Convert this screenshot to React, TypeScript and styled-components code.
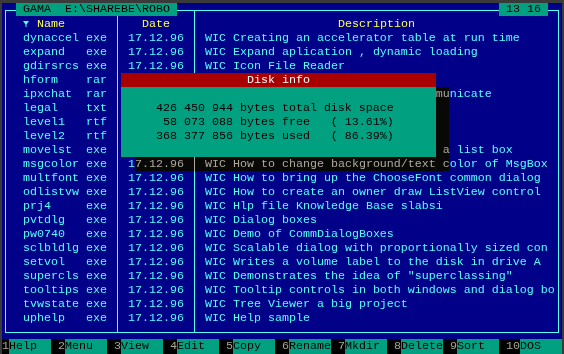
import React from 'react';
import styled, { createGlobalStyle } from 'styled-components';

const NAVY = '#000088';
const CYAN = '#55ffff';
const YELLOW = '#ffff55';
const GREEN = '#00a080';
const RED = '#a80000';
const TAN = '#a8a890';

const GlobalStyle = createGlobalStyle`
  html, body { margin: 0; padding: 0; background: #3a3a3a; }
  body { width: 564px; height: 354px; overflow: hidden; }
  #root { width: 564px; height: 354px; }
`;

const Screen = styled.div`
  position: relative;
  margin: 3px 2px 0 2px;
  width: 560px;
  height: 351px;
  background: ${NAVY};
  font-family: "Liberation Mono", "DejaVu Sans Mono", monospace;
  font-size: 11.667px;
  line-height: 14px;
  color: ${CYAN};
  white-space: pre;
  display: flex;
  flex-direction: column;
  overflow: hidden;
`;

const PanelArea = styled.div`
  height: 336px;
  flex: none;
`;

const Frame = styled.div`
  position: relative;
  box-sizing: border-box;
  margin: 7px 3px 0 3px;
  width: 554px;
  height: 323px;
  border: 1px solid ${CYAN};
  display: flex;
`;

const TitleTag = styled.div`
  position: absolute;
  top: -8px;
  height: 13px;
  line-height: 13px;
  background: ${GREEN};
  color: #000;
`;

const PathTitle = styled(TitleTag)`
  left: 10px;
  width: 161px;
`;

const Clock = styled(TitleTag)`
  left: 493px;
  width: 49px;
`;

const NameColumn = styled.div`
  box-sizing: border-box;
  width: 111px;
  padding: 6px 0 0 17px;
`;

const DateColumn = styled.div`
  box-sizing: border-box;
  width: 77px;
  border-left: 1px solid ${CYAN};
  padding-top: 6px;
  text-align: center;
`;

const DescColumn = styled.div`
  flex: 1;
  border-left: 1px solid ${CYAN};
  padding-top: 6px;
`;

const Header = styled.div`
  height: 14px;
  color: ${YELLOW};
  display: flex;
  align-items: center;
`;

const CenterHeader = styled(Header)`
  justify-content: center;
`;

const Arrow = styled.span`
  width: 14px;
  height: 14px;
  display: inline-flex;
  align-items: center;
  color: ${CYAN};
`;

const Row = styled.div`
  height: 14px;
  display: flex;
`;

const DateRow = styled.div`
  height: 14px;
`;

const DescRow = styled.div`
  height: 14px;
  padding-left: 10px;
  overflow: hidden;
`;

const FileName = styled.span`
  width: 63px;
  flex: none;
`;

const Ext = styled.span``;

const Dialog = styled.div`
  position: absolute;
  left: 119px;
  top: 70px;
  width: 315px;
  z-index: 2;
`;

const DialogTitle = styled.div`
  height: 14px;
  background: ${RED};
  color: #fff;
  text-align: center;
`;

const DialogBody = styled.div`
  box-sizing: border-box;
  height: 70px;
  background: ${GREEN};
  color: #000;
  padding: 14px 0 0 35px;
`;

const Shadow = styled.div`
  position: absolute;
  z-index: 1;
  backdrop-filter: grayscale(1) sepia(0.3) brightness(0.72);
  -webkit-backdrop-filter: grayscale(1) sepia(0.3) brightness(0.72);
`;

const RightShadow = styled(Shadow)`
  left: 434px;
  top: 84px;
  width: 14px;
  height: 84px;
`;

const BottomShadow = styled(Shadow)`
  left: 133px;
  top: 154px;
  width: 301px;
  height: 14px;
`;

const KeyBar = styled.div`
  display: flex;
  gap: 7px;
  height: 15px;
  background: #000;
`;

const Key = styled.div`
  display: flex;
`;

const KeyNum = styled.span`
  color: ${TAN};
`;

const KeyLabel = styled.span`
  width: 42px;
  height: 15px;
  background: ${GREEN};
  color: #000;
`;

const files: [string, string, string, string][] = [
  ['dynaccel', 'exe', '17.12.96', 'WIC Creating an accelerator table at run time'],
  ['expand', 'exe', '17.12.96', 'WIC Expand aplication , dynamic loading'],
  ['gdirsrcs', 'exe', '17.12.96', 'WIC Icon File Reader'],
  ['hform', 'rar', '17.12.96', 'WIC Help form'],
  ['ipxchat', 'rar', '17.12.96', 'WIC IPX chat how programs can communicate'],
  ['legal', 'txt', '17.12.96', 'Legal notes'],
  ['level1', 'rtf', '17.12.96', 'Level 1'],
  ['level2', 'rtf', '17.12.96', 'Level 2'],
  ['movelst', 'exe', '17.12.96', 'WIC How to move items to and from a list box'],
  ['msgcolor', 'exe', '17.12.96', 'WIC How to change background/text color of MsgBox'],
  ['multfont', 'exe', '17.12.96', 'WIC How to bring up the ChooseFont common dialog'],
  ['odlistvw', 'exe', '17.12.96', 'WIC How to create an owner draw ListView control'],
  ['prj4', 'exe', '17.12.96', 'WIC Hlp file Knowledge Base slabsi'],
  ['pvtdlg', 'exe', '17.12.96', 'WIC Dialog boxes'],
  ['pw0740', 'exe', '17.12.96', 'WIC Demo of CommDialogBoxes'],
  ['sclbldlg', 'exe', '17.12.96', 'WIC Scalable dialog with proportionally sized con'],
  ['setvol', 'exe', '17.12.96', 'WIC Writes a volume label to the disk in drive A'],
  ['supercls', 'exe', '17.12.96', 'WIC Demonstrates the idea of "superclassing"'],
  ['tooltips', 'exe', '17.12.96', 'WIC Tooltip controls in both windows and dialog bo'],
  ['tvwstate', 'exe', '17.12.96', 'WIC Tree Viewer a big project'],
  ['uphelp', 'exe', '17.12.96', 'WIC Help sample'],
];

const keys: [string, string][] = [
  ['1', 'Help'],
  ['2', 'Menu'],
  ['3', 'View'],
  ['4', 'Edit'],
  ['5', 'Copy'],
  ['6', 'Rename'],
  ['7', 'Mkdir'],
  ['8', 'Delete'],
  ['9', 'Sort'],
  ['10', 'DOS'],
];

const SortIcon = () => (
  <svg width="6" height="7" viewBox="0 0 6 7">
    <polygon points="0,0 6,0 3.5,3.5 3.5,6 2.5,6 2.5,3.5" fill={CYAN} />
  </svg>
);

export default function App() {
  return (
    <>
      <GlobalStyle />
      <Screen>
        <PanelArea>
          <Frame>
            <PathTitle>{' GAMA  E:\\SHAREBE\\ROBO '}</PathTitle>
            <Clock>{' 13 16 '}</Clock>
            <NameColumn>
              <Header>
                <Arrow>
                  <SortIcon />
                </Arrow>
                Name
              </Header>
              {files.map(([n, e]) => (
                <Row key={n}>
                  <FileName>{n}</FileName>
                  <Ext>{e}</Ext>
                </Row>
              ))}
            </NameColumn>
            <DateColumn>
              <CenterHeader>Date</CenterHeader>
              {files.map(([n, , d]) => (
                <DateRow key={n}>{d}</DateRow>
              ))}
            </DateColumn>
            <DescColumn>
              <CenterHeader>Description</CenterHeader>
              {files.map(([n, , , desc]) => (
                <DescRow key={n}>{desc}</DescRow>
              ))}
            </DescColumn>
          </Frame>
        </PanelArea>
        <KeyBar>
          {keys.map(([num, label]) => (
            <Key key={num}>
              <KeyNum>{num}</KeyNum>
              <KeyLabel>{label}</KeyLabel>
            </Key>
          ))}
        </KeyBar>
        <Dialog>
          <DialogTitle>Disk info</DialogTitle>
          <DialogBody>
            {'426 450 944 bytes total disk space\n 58 073 088 bytes free   ( 13.61%)\n368 377 856 bytes used   ( 86.39%)'}
          </DialogBody>
        </Dialog>
        <RightShadow />
        <BottomShadow />
      </Screen>
    </>
  );
}
